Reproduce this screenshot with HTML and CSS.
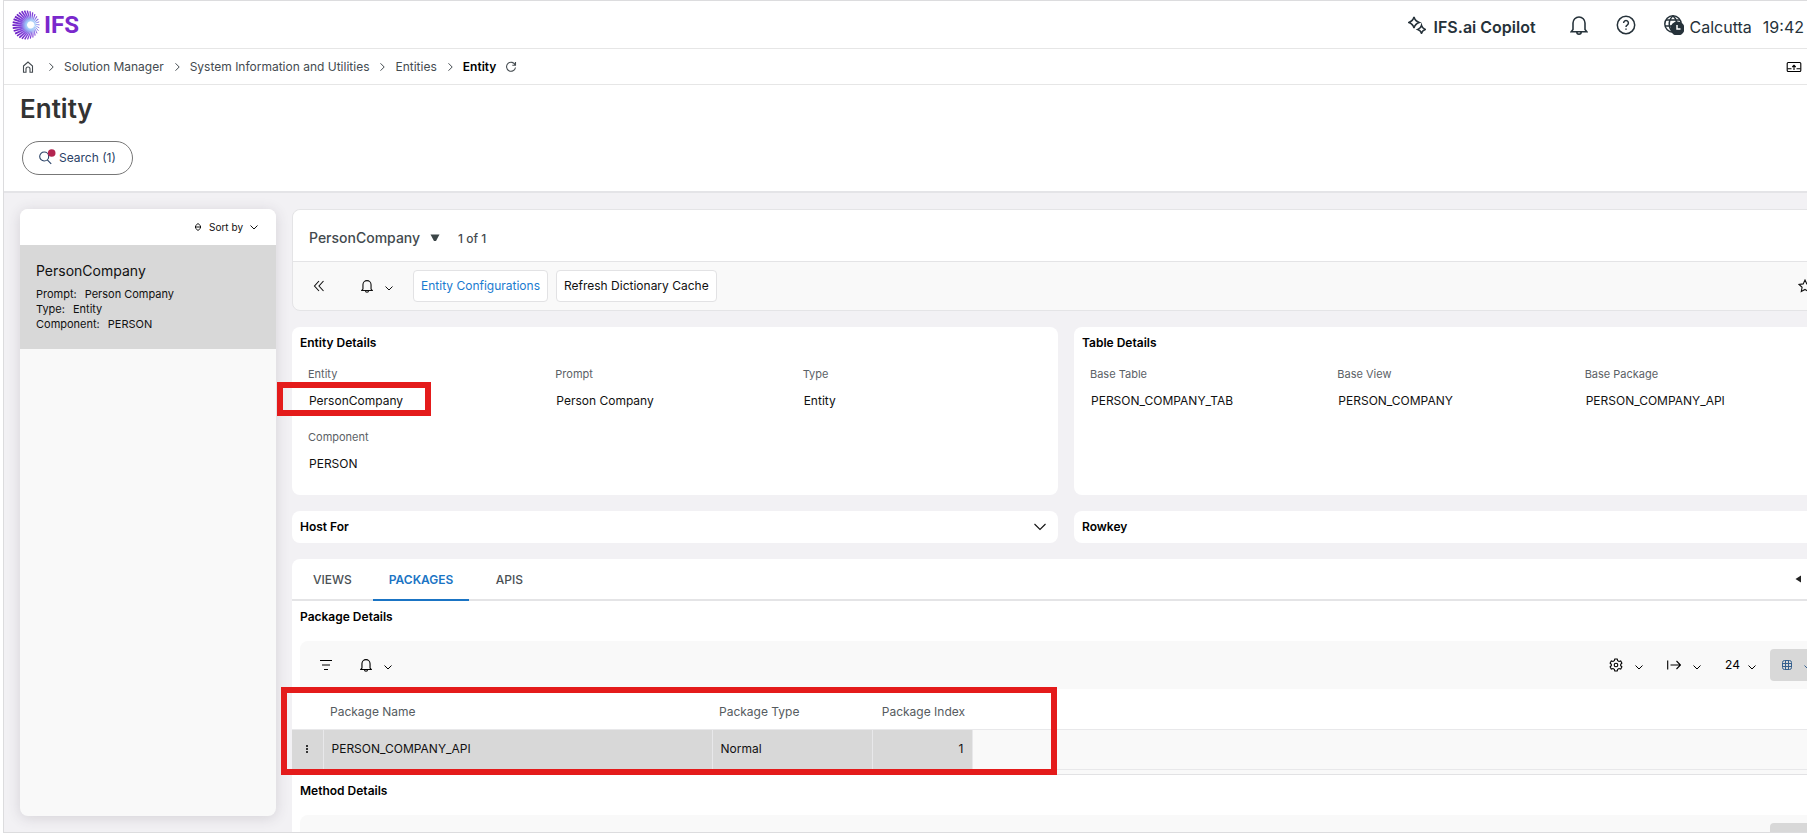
FILE: index.html
```html
<!DOCTYPE html>
<html lang="en">
<head>
    <meta charset="UTF-8">
    <meta name="viewport" content="width=device-width, initial-scale=1.0">
    <title>Entity - IFS Cloud</title>
    <link rel="stylesheet" href="styles.css">
</head>
<body>
    <!-- shared icons -->
    <svg class="sprite" aria-hidden="true">
        <symbol id="chevron-down" viewBox="0 0 8 8"><path d="M0.5 2.5 4 6l3.500-3.500"/></symbol>
        <symbol id="chevron-right" viewBox="0 0 8 8"><path d="M2.500 0.300 6.200 4 2.500 7.700"/></symbol>
        <symbol id="bell" viewBox="0 0 16 18"><path d="M2.600 13V7.200a5.400 5.400 0 0 1 10.800 0V13l1.600 2H1z M6 15.300a2 2 0 0 0 4 0"/></symbol>
    </svg>

    <div class="app">
        <header class="topbar">
            <a class="logo" href="#" aria-label="IFS">
                <svg class="logo-mark" viewBox="0 0 30 32">
                    <defs>
                        <radialGradient id="glow" gradientUnits="userSpaceOnUse" cx="20" cy="16" r="18">
                            <stop offset="0" stop-color="#e8fbff"/>
                            <stop offset="0.3" stop-color="#9cc4f8"/>
                            <stop offset="0.6" stop-color="#8448dc"/>
                            <stop offset="1" stop-color="#6d1fc4"/>
                        </radialGradient>
                    </defs>
                    <g id="rays" stroke="url(#glow)"></g>
                </svg>
                <span>IFS</span>
            </a>
            <div class="topbar-right">
                <button class="copilot">
                    <svg class="icon-18" viewBox="0 0 18 18"><path d="M6 1q1 4 5.200 5.500Q7 8 6 12 5 8 .8 6.500 5 5 6 1z M13.500 9.500q.7 2.700 3.700 3.900-3 1.200-3.700 3.900-.7-2.700-3.700-3.900 3-1.200 3.700-3.900z"/></svg>
                    <span>IFS.ai Copilot</span>
                </button>
                <button class="icon-btn" aria-label="Notifications"><svg class="bell-lg"><use href="#bell"/></svg></button>
                <button class="icon-btn" aria-label="Help">
                    <svg class="icon-20" viewBox="0 0 20 20"><circle cx="10" cy="10" r="8.700"/><path d="M7.600 8a2.400 2.400 0 1 1 3.600 2.100c-.9.500-1.200.9-1.200 1.900M10 13.400v1.400"/></svg>
                </button>
                <div class="clock">
                    <svg class="icon-20" viewBox="0 0 20 20"><circle cx="9" cy="9" r="8.200"/><path d="M2 5h14M1 11h16M9 1C4 5 4 13 9 17M9 1c2 1.500 3.500 4 3.700 7"/><circle cx="13.500" cy="13.500" r="6.300" fill="#26323a"/><path stroke="#fff" d="M13 10v4h3.500"/></svg>
                    <span>Calcutta</span>
                    <time>19:42</time>
                </div>
            </div>
        </header>

        <nav class="breadcrumb">
            <a class="home" href="#" aria-label="Home"><svg class="icon-12" viewBox="0 0 12 12"><path d="M1.500 5 6 1l4.500 4v6.200H8V8a2 2 0 0 0-4 0v3.200H1.500z"/></svg></a>
            <svg class="icon-8"><use href="#chevron-right"/></svg>
            <a href="#">Solution Manager</a>
            <svg class="icon-8"><use href="#chevron-right"/></svg>
            <a href="#">System Information and Utilities</a>
            <svg class="icon-8"><use href="#chevron-right"/></svg>
            <a href="#">Entities</a>
            <svg class="icon-8"><use href="#chevron-right"/></svg>
            <strong>Entity</strong>
            <button class="icon-btn" aria-label="Refresh"><svg class="icon-12" viewBox="0 0 12 12"><path d="M10.200 4A4.500 4.500 0 1 0 10.500 6.500M10.500 1v3.200H7.300"/></svg></button>
            <button class="icon-btn dock" aria-label="Attachments"><svg class="icon-16" viewBox="0 0 16 12"><rect x="1.200" y="1.500" width="13.600" height="9" rx="1"/><path d="M1.500 7.700h4M10.500 7.700h4M8 9V4.500M6.300 6 8 4.300 9.700 6"/></svg></button>
        </nav>

        <div class="page-head">
            <h1>Entity</h1>
            <button class="search-btn">
                <svg class="icon-16" viewBox="0 0 16 16"><circle cx="5.200" cy="6.500" r="4.500"/><path d="m8.300 9.900 3.900 4"/><circle class="dot" cx="12.700" cy="3" r="3.800"/></svg>
                Search (1)
            </button>
        </div>

        <div class="content">
            <aside class="sidebar">
                <div class="sort">
                    <button>
                        <svg class="icon-8" viewBox="0 0 8 8"><path d="M1.500 2.800 4 .5l2.500 2.300v2.400L4 7.500 1.500 5.200zM2 4h4"/></svg>
                        Sort by
                        <svg class="icon-8"><use href="#chevron-down"/></svg>
                    </button>
                </div>
                <div class="list-item">
                    <h2>PersonCompany</h2>
                    <p><span>Prompt:</span>Person Company</p>
                    <p><span>Type:</span>Entity</p>
                    <p><span>Component:</span>PERSON</p>
                </div>
            </aside>

            <main class="main">
                <section class="record">
                    <div class="record-title">
                        <button>PersonCompany <svg class="caret" viewBox="0 0 10 8"><path d="M.5.500h9L6 7H4z"/></svg></button>
                        <span>1 of 1</span>
                    </div>
                    <div class="record-bar">
                        <button class="icon-btn collapse" aria-label="Collapse"><svg class="icon-12" viewBox="0 0 12 12"><path d="M6 1 1.500 6 6 11M10.500 1 6 6l4.500 5"/></svg></button>
                        <button class="icon-btn drop" aria-label="Subscribe"><svg class="bell-sm"><use href="#bell"/></svg><svg class="icon-8"><use href="#chevron-down"/></svg></button>
                        <button class="cmd cmd-link">Entity Configurations</button>
                        <button class="cmd">Refresh Dictionary Cache</button>
                        <button class="icon-btn star" aria-label="Favorite"><svg class="icon-14" viewBox="0 0 14 14"><path d="m7 1 1.800 3.900 4.200.5-3.100 2.900.8 4.200L7 10.400l-3.700 2.100.8-4.200L1 5.400l4.200-.5z"/></svg></button>
                    </div>
                </section>

                <div class="cards">
                    <section class="card details">
                        <h3>Entity Details</h3>
                        <dl class="fields">
                            <div class="marked"><dt>Entity</dt><dd>PersonCompany</dd></div>
                            <div><dt>Prompt</dt><dd>Person Company</dd></div>
                            <div><dt>Type</dt><dd>Entity</dd></div>
                            <div><dt>Component</dt><dd>PERSON</dd></div>
                        </dl>
                    </section>
                    <section class="card details">
                        <h3>Table Details</h3>
                        <dl class="fields">
                            <div><dt>Base Table</dt><dd>PERSON_COMPANY_TAB</dd></div>
                            <div><dt>Base View</dt><dd>PERSON_COMPANY</dd></div>
                            <div><dt>Base Package</dt><dd>PERSON_COMPANY_API</dd></div>
                        </dl>
                    </section>
                    <section class="card folded">
                        <h3>Host For</h3>
                        <button class="icon-btn" aria-label="Expand"><svg class="icon-12" viewBox="0 0 12 12"><path d="m.5 3 5.500 5.500L11.500 3"/></svg></button>
                    </section>
                    <section class="card folded">
                        <h3>Rowkey</h3>
                    </section>
                </div>

                <section class="card tabs-card">
                    <div class="tabs" role="tablist">
                        <button class="tab" role="tab">VIEWS</button>
                        <button class="tab active" role="tab" aria-selected="true">PACKAGES</button>
                        <button class="tab" role="tab">APIS</button>
                        <button class="icon-btn scroll-tabs" aria-label="Scroll tabs"><svg class="arrow" viewBox="0 0 6 8"><path d="M6 .5v7L.5 4z"/></svg></button>
                    </div>

                    <h3>Package Details</h3>
                    <div class="grid-bar">
                        <button class="icon-btn filter" aria-label="Filter"><svg class="icon-12" viewBox="0 0 12 12"><path d="M0 1.500h12M2 6h8M4 10.500h4"/></svg></button>
                        <button class="icon-btn drop" aria-label="Subscribe"><svg class="bell-sm"><use href="#bell"/></svg><svg class="icon-8"><use href="#chevron-down"/></svg></button>
                        <div class="grid-tools">
                            <button class="icon-btn drop" aria-label="Settings"><svg class="icon-14" viewBox="0 0 14 14"><path d="M5.800 1h2.400l.5 1.700 1.300.8 1.700-.5 1.200 2.100L11.700 6.300v1.400l1.200 1.200-1.200 2.100-1.700-.5-1.300.8L8.200 13H5.800l-.5-1.700-1.300-.8-1.700.5L1.100 8.900l1.200-1.200V6.300L1.100 5.100 2.300 3l1.700.5 1.300-.8z"/><circle cx="7" cy="7" r="1.800"/></svg><svg class="icon-8"><use href="#chevron-down"/></svg></button>
                            <button class="icon-btn drop" aria-label="Export"><svg class="icon-14" viewBox="0 0 14 14"><path d="M.7 2.500v9M3.500 7h10M9.500 3l4 4-4 4"/></svg><svg class="icon-8"><use href="#chevron-down"/></svg></button>
                            <button class="icon-btn drop size">24<svg class="icon-8"><use href="#chevron-down"/></svg></button>
                            <button class="icon-btn drop view" aria-label="Table view"><svg class="icon-10" viewBox="0 0 10 10"><rect x=".5" y=".5" width="9" height="9" rx="2"/><path d="M3.500.500v9M6.500.500v9M.5 3.500h9M.5 6.500h9"/></svg><svg class="icon-8"><use href="#chevron-down"/></svg></button>
                        </div>
                    </div>
                    <div class="table-wrap">
                        <table>
                            <thead>
                                <tr><th class="col-menu"></th><th class="col-name">Package Name</th><th class="col-type">Package Type</th><th class="col-index">Package Index</th><th></th></tr>
                            </thead>
                            <tbody>
                                <tr><td class="menu"><button class="icon-btn" aria-label="Row menu"><svg class="dots" viewBox="0 0 2 8"><path d="M0 0h2v2H0zM0 3h2v2H0zM0 6h2v2H0z"/></svg></button></td><td>PERSON_COMPANY_API</td><td>Normal</td><td class="num">1</td><td class="rest"></td></tr>
                            </tbody>
                        </table>
                    </div>

                    <h3>Method Details</h3>
                    <div class="grid-bar">
                        <div class="grid-tools">
                            <button class="icon-btn drop view" aria-label="Table view"></button>
                        </div>
                    </div>
                </section>
            </main>
        </div>
    </div>

    <script>
        // logo rays: long and thick on the left, short and thin on the right of the glow
        const rays = document.getElementById('rays');
        const count = 30;
        for (let i = 0; i < count; i++) {
            const a = i * 2 * Math.PI / count;
            const line = document.createElementNS('http://www.w3.org/2000/svg', 'line');
            line.setAttribute('x1', 20 + 4 * Math.cos(a));
            line.setAttribute('y1', 16 + 4 * Math.sin(a));
            line.setAttribute('x2', 15 + 14.5 * Math.cos(a + 0.2));
            line.setAttribute('y2', 16 + 15.5 * Math.sin(a + 0.2));
            line.setAttribute('stroke-width', 1.5 - 0.5 * Math.cos(a));
            rays.appendChild(line);
        }
    </script>
</body>
</html>
```
FILE: styles.css
```css
*, *::after {
    box-sizing: border-box;
}

body {
    margin: 0;
    overflow: hidden;
    font-family: Inter, "Liberation Sans", sans-serif;
    font-size: 12px;
    line-height: 16px;
    color: #111;
    background: #fff;
}

h1, h2, h3, p, dl, dd {
    margin: 0;
}

button {
    padding: 0;
    border: 0;
    background: none;
    font: inherit;
    color: inherit;
    cursor: pointer;
}

a {
    color: inherit;
    text-decoration: none;
}

svg {
    display: block;
    flex: none;
    fill: none;
    stroke: currentColor;
    stroke-width: 1.1;
}

.sprite {
    position: absolute;
    width: 0;
    height: 0;
}

.icon-8 { width: 8px; height: 8px; stroke-width: 1; }
.icon-10 { width: 10px; height: 10px; stroke-width: 1; }
.icon-12 { width: 12px; height: 12px; }
.icon-14 { width: 14px; height: 14px; }
.icon-16 { width: 16px; height: 16px; }
.icon-18 { width: 18px; height: 18px; stroke-width: 1.6; }
.icon-20 { width: 20px; height: 20px; stroke-width: 1.5; }
.bell-lg { width: 18px; height: 20px; stroke-width: 1.4; }
.bell-sm { width: 12px; height: 14px; stroke-width: 1.5; }

.icon-btn {
    display: flex;
    align-items: center;
    justify-content: center;
}

.app {
    display: flex;
    flex-direction: column;
    height: calc(100vh - 2px);
    margin-left: 3px;
    overflow: hidden;
    border: 1px solid #dcdcde;
    border-right: 0;
}

/* top bar */
.topbar {
    display: flex;
    flex: none;
    align-items: center;
    justify-content: space-between;
    height: 48px;
    padding: 0 3px 0 8px;
    border-bottom: 1px solid #e6e6e6;
    color: #26323a;
}

.logo {
    display: flex;
    align-items: center;
    gap: 4px;
    font-family: Roboto, "Liberation Sans", sans-serif;
    font-size: 24px;
    font-weight: 700;
    line-height: 30px;
    color: #7a28cc;
}

.logo-mark {
    width: 28px;
    height: 30px;
}

.topbar-right, .copilot, .clock {
    display: flex;
    align-items: center;
}

.topbar-right {
    font-size: 16px;
    line-height: 20px;
}

.topbar-right span, .topbar-right time {
    padding-top: 4px;
}

.copilot {
    gap: 8px;
    margin-right: 34px;
    font-weight: 600;
}

.topbar-right .icon-btn {
    margin-right: 28px;
}

.clock {
    gap: 6px;
}

.clock time {
    margin-left: 5px;
}

/* breadcrumb */
.breadcrumb {
    display: flex;
    flex: none;
    align-items: center;
    gap: 9px;
    height: 36px;
    padding: 0 5px 0 18px;
    border-bottom: 1px solid #e6e6e6;
    color: #444b50;
}

.breadcrumb .home {
    margin-right: 4px;
}

.breadcrumb strong {
    font-weight: 600;
    color: #000;
}

.breadcrumb .dock {
    margin-left: auto;
    color: #000;
}

.page-head {
    flex: none;
    height: 108px;
    padding: 8px 18px 0 16px;
    border-bottom: 2px solid #e4e4e7;
}

.page-head h1 {
    margin-bottom: 16px;
    font-size: 26px;
    font-weight: 600;
    line-height: 32px;
    color: #333;
}

.search-btn {
    display: flex;
    align-items: center;
    gap: 4px;
    height: 34px;
    margin-left: 2px;
    padding: 0 16px;
    border: 1px solid #777;
    border-radius: 17px;
    color: #2a4266;
}

.search-btn svg {
    overflow: visible;
}

.search-btn .dot {
    fill: #b32550;
    stroke: none;
}

/* content */
.content {
    display: flex;
    flex: 1;
    align-items: flex-start;
    gap: 16px;
    min-height: 0;
    padding: 16px 0 16px 16px;
    background: #f2f1f4;
}

.sidebar {
    flex: none;
    align-self: stretch;
    width: 256px;
    overflow: hidden;
    border-radius: 8px;
    background: #f9f9f9;
    box-shadow: 0 2px 14px rgba(60, 50, 70, 0.16);
}

.sort {
    display: flex;
    justify-content: flex-end;
    height: 36px;
    padding-right: 18px;
    background: #fff;
    font-size: 10px;
}

.sort button {
    display: flex;
    align-items: center;
    gap: 7px;
}

.list-item {
    height: 104px;
    padding: 16px;
    background: #d8d8d8;
    font-size: 11px;
    line-height: 15px;
}

.list-item h2 {
    margin-bottom: 6px;
    font-size: 14px;
    font-weight: 400;
    line-height: 20px;
}

.list-item span {
    margin-right: 8px;
}

.main {
    flex: 1;
    min-width: 0;
    margin-right: -33px;
}

.record {
    margin-bottom: 16px;
    border: 1px solid #e4e4e6;
    border-radius: 8px;
    background: #f9f9f9;
}

.record-title {
    display: flex;
    align-items: center;
    gap: 18px;
    height: 52px;
    padding: 4px 16px 0;
    border-bottom: 1px solid #e4e4e6;
    border-radius: 8px 8px 0 0;
    background: #fff;
    font-weight: 500;
    color: #434a4e;
}

.record-title button {
    display: flex;
    align-items: center;
    gap: 10px;
    font-size: 14px;
}

.record-title span {
    padding-top: 2px;
}

.caret {
    width: 10px;
    height: 8px;
    fill: #3c4648;
    stroke: none;
}

.record-bar {
    display: flex;
    align-items: center;
    height: 48px;
    padding: 0 27px 0 20px;
}

.collapse {
    margin-right: 36px;
}

.drop {
    gap: 12px;
}

.drop .icon-8 {
    margin-top: 3px;
}

.record-bar .drop {
    margin-right: 20px;
}

.cmd {
    height: 32px;
    margin-right: 8px;
    padding: 0 7px;
    border: 1px solid #e2e2e4;
    border-radius: 4px;
    background: #fff;
}

.cmd-link {
    color: #1a7bd0;
}

.star {
    margin-left: auto;
}

.cards {
    display: grid;
    grid-template-columns: 1fr 1fr;
    gap: 16px;
    margin-bottom: 16px;
}

.card {
    border-radius: 8px;
    background: #fff;
}

.card h3 {
    font-size: 12px;
    font-weight: 600;
    line-height: 16px;
    color: #000;
}

.details {
    padding: 8px 8px 19px;
}

.fields {
    display: grid;
    grid-template-columns: repeat(3, 1fr);
    row-gap: 16px;
    padding: 15px 0 0 8px;
}

.fields dt {
    margin-bottom: 10px;
    font-size: 11px;
    color: #5b6166;
}

.fields dd {
    padding: 1px 0 4px 1px;
}

.marked {
    position: relative;
}

/* red highlight frames */
.marked::after, .table-wrap::after {
    content: "";
    position: absolute;
    border: 6px solid #e41b1b;
}

.marked::after {
    top: 16px;
    left: -31px;
    width: 154px;
    height: 34px;
}

.folded {
    display: flex;
    align-items: center;
    justify-content: space-between;
    height: 32px;
    padding: 0 12px 0 8px;
}

/* tabs */
.tabs {
    display: flex;
    gap: 5px;
    height: 42px;
    padding-left: 5px;
    border-bottom: 2px solid #e4e4e6;
}

.tab {
    min-width: 70px;
    height: 42px;
    padding: 2px 16px 0;
    border-bottom: 2px solid transparent;
    font-weight: 500;
    color: #4a5054;
}

.tab.active {
    border-color: #1a74c4;
    font-weight: 600;
    color: #1a74c4;
}

.scroll-tabs {
    margin: 0 39px 0 auto;
}

.arrow {
    width: 6px;
    height: 8px;
    fill: #222;
    stroke: none;
}

.tabs-card h3 {
    padding: 8px 8px 16px;
}

.grid-bar {
    display: flex;
    align-items: center;
    height: 48px;
    margin: 0 8px;
    padding: 0 8px 0 20px;
    border-radius: 8px 8px 0 0;
    background: #f9f9f9;
    color: #000;
}

.filter {
    margin-right: 28px;
}

.grid-tools {
    display: flex;
    align-items: center;
    gap: 24px;
    margin-left: auto;
}

.size {
    gap: 8px;
    margin-right: -10px;
}

.view {
    width: 54px;
    height: 32px;
    border-radius: 4px;
    background: #d8d8d8;
    color: #35608f;
}

.table-wrap {
    position: relative;
    padding-bottom: 4px;
    border-bottom: 1px solid #e2e2e4;
    background: #f9f9f9;
}

.table-wrap::after {
    top: -2px;
    left: -11px;
    width: 776px;
    height: 88px;
}

table {
    width: 100%;
    table-layout: fixed;
    border-collapse: collapse;
    background: #fff;
}

th {
    height: 40px;
    padding: 6px 7px 0;
    font-weight: 400;
    text-align: left;
    color: #555b60;
}

td {
    height: 40px;
    padding: 0 8px;
    border: solid #e8e8ea;
    border-width: 1px 1px 1px 0;
    background: #d8d8d8;
}

.col-menu { width: 31px; }
.col-name { width: 389px; }
.col-type { width: 160px; }
.col-index { width: 100px; text-align: right; }

.menu .icon-btn {
    margin: 0 auto;
}

.dots {
    width: 2px;
    height: 8px;
    fill: #333;
    stroke: none;
}

.num {
    text-align: right;
}

.rest {
    background: #f9f9f9;
}
```
